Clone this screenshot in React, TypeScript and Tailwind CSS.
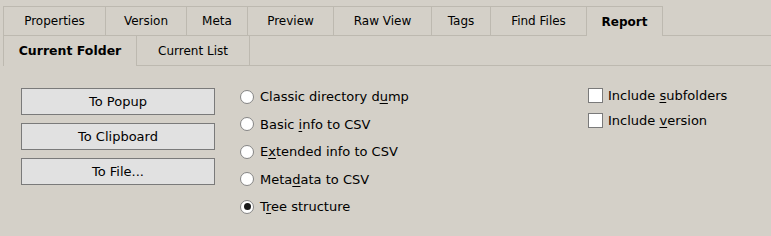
import React from 'react';

const topTabs = ['Properties', 'Version', 'Meta', 'Preview', 'Raw View', 'Tags', 'Find Files', 'Report'];
const topWidths = [103, 81, 61, 86, 98, 59, 96, 76];

function U({ children }: { children: React.ReactNode }) {
  return <span className="underline underline-offset-2">{children}</span>;
}

function Radio({ checked, label }: { checked?: boolean; label: React.ReactNode }) {
  return (
    <div className="flex h-[27.5px] items-center gap-[6px]">
      <span className="flex h-[14px] w-[14px] items-center justify-center rounded-full border border-[#858585] bg-white">
        {checked && <span className="h-[7px] w-[7px] rounded-full bg-[#1a1a1a]" />}
      </span>
      <span>{label}</span>
    </div>
  );
}

function Check({ label }: { label: React.ReactNode }) {
  return (
    <div className="flex h-[25px] items-center gap-[5px]">
      <span className="h-[15px] w-[15px] border border-[#7a7a7a] bg-white" />
      <span>{label}</span>
    </div>
  );
}

export default function App() {
  return (
    <div className="h-[236px] w-[771px] overflow-hidden bg-[#d4d0c8] text-black" style={{ fontFamily: '"DejaVu Sans", Verdana, sans-serif' }}>
      {/* Tabs */}
      <div className="pl-[3px] pt-[6px] text-[12px]">
        <div className="flex h-[30px]">
          {topTabs.map((t, i) => {
            const active = t === 'Report';
            return (
              <div
                key={t}
                style={{ width: topWidths[i] }}
                className={`flex items-center justify-center border-t border-r border-[#bdb9b0] ${i === 0 ? 'border-l' : ''} ${
                  active ? 'font-bold' : 'border-b'
                }`}
              >
                {t}
              </div>
            );
          })}
          <div className="flex-1 border-b border-[#bdb9b0]" />
        </div>
        <div className="flex h-[30px]">
          <div className="flex w-[134px] items-center justify-center border-l border-r border-[#bdb9b0] text-[12.5px] font-bold">
            Current Folder
          </div>
          <div className="flex w-[113px] items-center justify-center border-r border-b border-[#bdb9b0]">Current List</div>
          <div className="flex-1 border-b border-[#bdb9b0]" />
        </div>
      </div>

      {/* Report options */}
      <div className="flex pl-[21px] pt-[22px] text-[13px]">
        <div className="flex w-[194px] flex-col gap-[8px]">
          {['To Popup', 'To Clipboard', 'To File...'].map((b) => (
            <button key={b} className="h-[27px] border border-[#7a7a7a] bg-[#e1e1e1] text-center">
              {b}
            </button>
          ))}
        </div>
        <div className="ml-[25px] -mt-[5px] flex w-[348px] flex-col">
          <Radio label={<>Classic directory d<U>u</U>mp</>} />
          <Radio label={<>Basic <U>i</U>nfo to CSV</>} />
          <Radio label={<>E<U>x</U>tended info to CSV</>} />
          <Radio label={<>Meta<U>d</U>ata to CSV</>} />
          <Radio checked label={<>T<U>r</U>ee structure</>} />
        </div>
        <div className="-mt-[5px] flex flex-col">
          <Check label={<>Include <U>s</U>ubfolders</>} />
          <Check label={<>Include <U>v</U>ersion</>} />
        </div>
      </div>
    </div>
  );
}
